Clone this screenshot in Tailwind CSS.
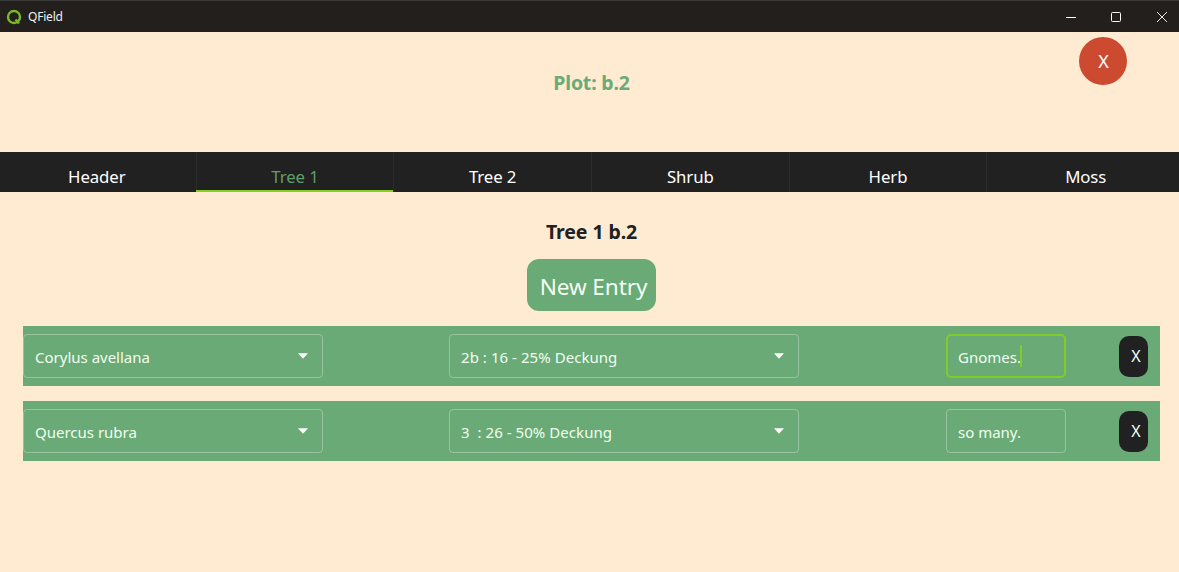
<!DOCTYPE html>
<html lang="en">
<head>
  <meta charset="UTF-8">
  <title>QField</title>
  <script src="https://cdn.jsdelivr.net/npm/@tailwindcss/browser@4"></script>
</head>
<body class="w-[1179px] h-[572px] overflow-hidden bg-[#ffebd1] font-['Noto_Sans','Open_Sans',sans-serif] text-white">

<!-- Title bar -->
<div class="h-[32px] bg-[#221f1c] border-t border-[#3a3a3a] flex items-center pl-[6px]">
  <svg class="w-[16px] h-[16px]" viewBox="0 0 16 16" fill="none">
    <circle cx="8" cy="8" r="6" stroke="#7cb82a" stroke-width="2.4"/>
    <path d="M9.5 10.5 L13 14.5" stroke="#7cb82a" stroke-width="2.4"/>
  </svg>
  <span class="ml-[6px] text-[12px] tracking-[-0.2px] text-[#f0f0f0]">QField</span>
  <div class="ml-auto mr-[-6px] flex items-center">
    <div class="w-[45px] h-[31px] pr-[1px] flex items-center justify-center">
      <svg class="w-[10px] h-[10px]" viewBox="0 0 10 10"><path d="M0 5.5H10" stroke="#fff"/></svg>
    </div>
    <div class="w-[45px] h-[31px] pr-[1px] flex items-center justify-center">
      <svg class="w-[10px] h-[10px]" viewBox="0 0 10 10" fill="none"><rect x="0.5" y="0.5" width="9" height="9" rx="1" stroke="#fff"/></svg>
    </div>
    <div class="w-[46px] h-[31px] flex items-center justify-center">
      <svg class="w-[10px] h-[10px]" viewBox="0 0 10 10"><path d="M0 0L10 10M10 0L0 10" stroke="#fff" stroke-width="0.9"/></svg>
    </div>
  </div>
</div>

<!-- Plot header -->
<div class="relative w-[1183px] h-[120px] flex justify-center pt-[37px]">
  <div class="text-[19.5px] leading-[28px] font-bold tracking-[-0.2px] text-[#6aaa76]">Plot: b.2</div>
  <button class="absolute left-[1079px] top-[5px] w-[48px] h-[48px] pl-[1px] rounded-full bg-[#cc4a30] text-[18px] flex items-center justify-center">X</button>
</div>

<!-- Tabs -->
<div class="h-[40px] bg-[#212121] overflow-hidden">
  <div class="w-[1186px] h-full ml-[-2px] grid grid-cols-6 text-[16.8px] tracking-[-0.1px] leading-[26px]">
    <div class="flex items-start justify-center pt-[12px]">Header</div>
    <div class="flex flex-col items-center pt-[12px] border-l border-[#2c2c2c] text-[#5e9e68]">
      <span>Tree 1</span>
      <div class="mt-auto ml-[-1px] w-[calc(100%+1px)] h-[2px] shrink-0 bg-[#84d020]"></div>
    </div>
    <div class="flex items-start justify-center pt-[12px] border-l border-[#2c2c2c]">Tree 2</div>
    <div class="flex items-start justify-center pt-[12px] border-l border-[#2c2c2c]">Shrub</div>
    <div class="flex items-start justify-center pt-[12px] border-l border-[#2c2c2c]">Herb</div>
    <div class="flex items-start justify-center pt-[12px] border-l border-[#2c2c2c]">Moss</div>
  </div>
</div>

<!-- Tree section -->
<div class="w-[1183px] flex flex-col items-center pt-[27px]">
  <div class="text-[19.5px] leading-[26px] font-bold tracking-[-0.1px] text-[#212121]">Tree 1 b.2</div>
  <button class="mt-[14px] w-[129px] h-[52px] pl-[4px] pt-[3px] rounded-[12px] bg-[#6aaa76] text-[22.6px] leading-[49px] tracking-[-0.1px] text-[#f4fff4]">New Entry</button>
</div>

<!-- Entries -->
<div class="mt-[15px] mx-[23px] w-[1137px] flex flex-col gap-[15px] text-[15px] leading-[24px] text-[#f0fff0]">
  <div class="h-[60px] bg-[#6aaa76] flex items-center">
    <div class="w-[300px] h-[44px] rounded-[4px] border border-white/30 pl-[11px] pr-[14px] pt-[1px] flex items-center justify-between">
      <span>Corylus avellana</span>
      <svg class="w-[10px] h-[6px] mt-[-1px]" viewBox="0 0 11 6"><path d="M0 0H11L5.5 6Z" fill="#fff"/></svg>
    </div>
    <div class="ml-[126px] w-[350px] h-[44px] rounded-[4px] border border-white/30 pl-[11px] pr-[14px] pt-[1px] flex items-center justify-between">
      <span class="tracking-[0.05px]">2b : 16 - 25% Deckung</span>
      <svg class="w-[10px] h-[6px] mt-[-1px]" viewBox="0 0 11 6"><path d="M0 0H11L5.5 6Z" fill="#fff"/></svg>
    </div>
    <div class="ml-[147px] w-[120px] h-[44px] rounded-[5px] border-2 border-[#80cc28] pl-[10px] pt-[1px] flex items-center">
      <span>Gnomes.</span><span class="w-[2px] h-[22px] mt-[-1px] ml-[-1px] bg-[#80cc28]"></span>
    </div>
    <button class="ml-[53px] w-[29px] h-[41px] pl-[5px] rounded-[10px] bg-[#212121] text-[16px] flex items-center justify-center">X</button>
  </div>
  <div class="h-[60px] bg-[#6aaa76] flex items-center">
    <div class="w-[300px] h-[44px] rounded-[4px] border border-white/30 pl-[11px] pr-[14px] pt-[1px] flex items-center justify-between">
      <span>Quercus rubra</span>
      <svg class="w-[10px] h-[6px] mt-[-1px]" viewBox="0 0 11 6"><path d="M0 0H11L5.5 6Z" fill="#fff"/></svg>
    </div>
    <div class="ml-[126px] w-[350px] h-[44px] rounded-[4px] border border-white/30 pl-[11px] pr-[14px] pt-[1px] flex items-center justify-between">
      <span class="whitespace-pre tracking-[0.05px]">3  : 26 - 50% Deckung</span>
      <svg class="w-[10px] h-[6px] mt-[-1px]" viewBox="0 0 11 6"><path d="M0 0H11L5.5 6Z" fill="#fff"/></svg>
    </div>
    <div class="ml-[147px] w-[120px] h-[44px] rounded-[4px] border border-white/30 pl-[11px] pt-[1px] flex items-center">
      <span>so many.</span>
    </div>
    <button class="ml-[53px] w-[29px] h-[41px] pl-[5px] rounded-[10px] bg-[#212121] text-[16px] flex items-center justify-center">X</button>
  </div>
</div>

</body>
</html>
